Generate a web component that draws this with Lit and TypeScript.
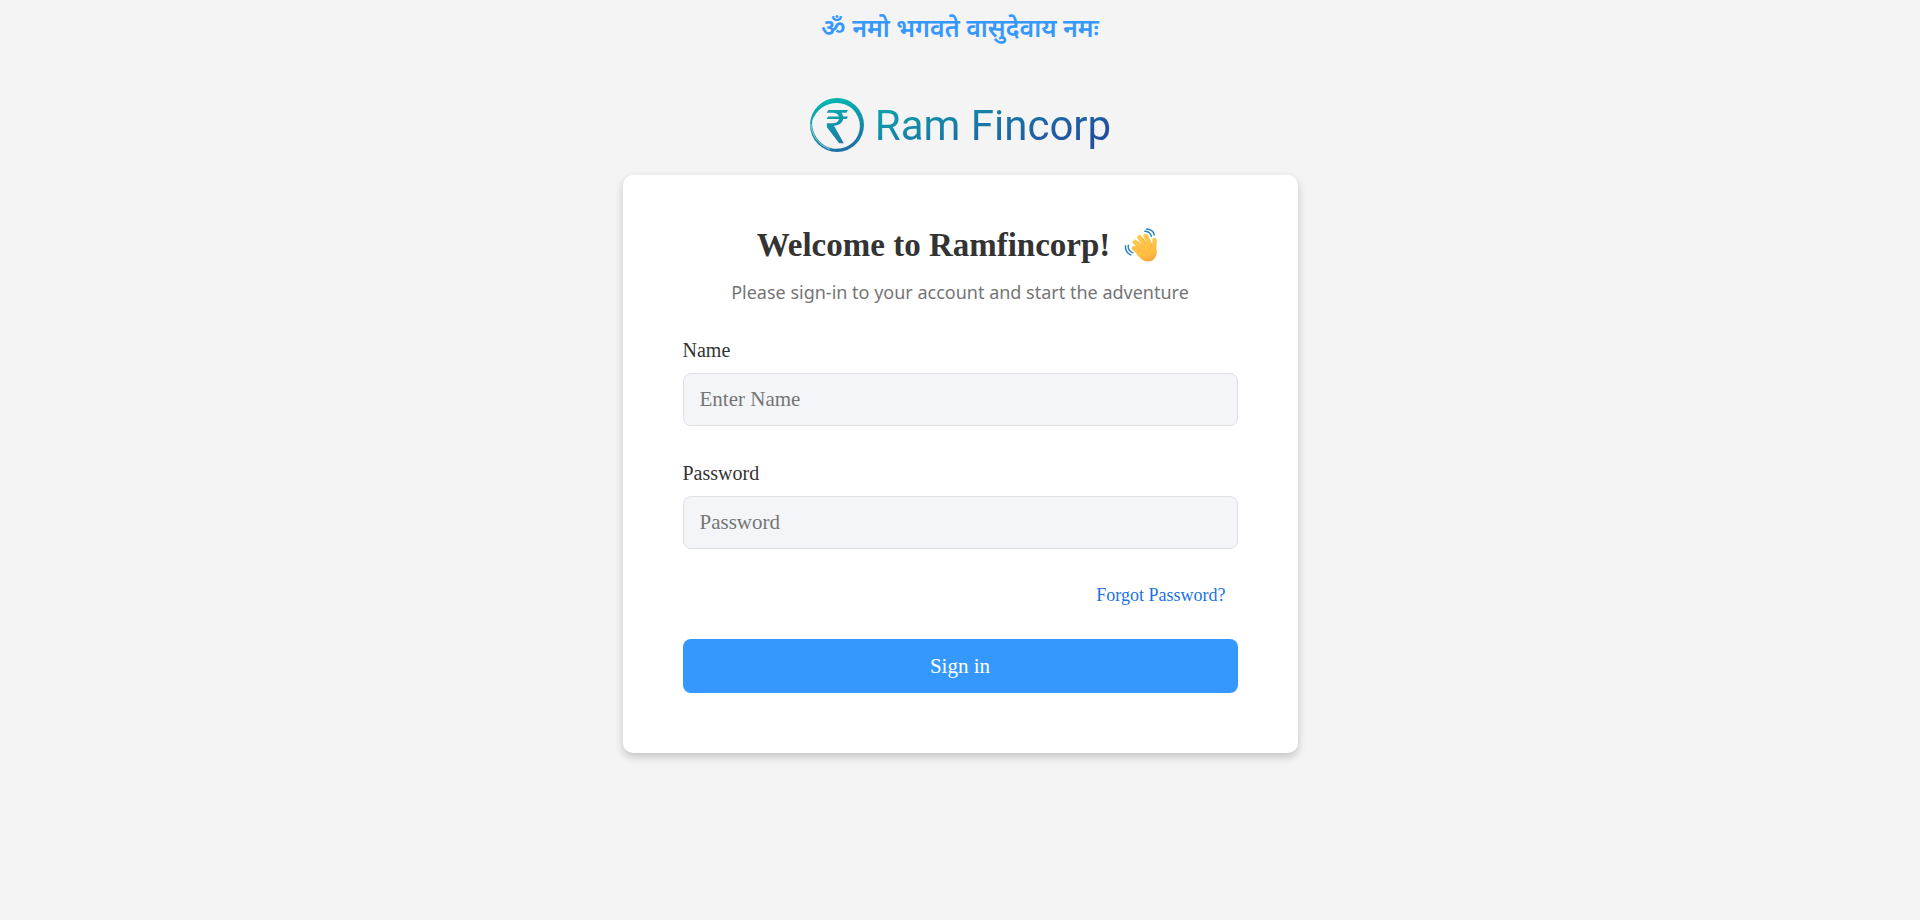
import { LitElement, html, css } from "lit";
import { customElement } from "lit/decorators.js";

@customElement("brand-logo")
class BrandLogo extends LitElement {
  static styles = css`
    :host {
      display: flex;
      align-items: center;
      gap: 10px;
    }
    .mark {
      width: 56px;
      height: 56px;
      flex: none;
    }
    .name {
      padding-top: 2px;
      font: 400 42px/54px Roboto, "Liberation Sans", sans-serif;
      background: linear-gradient(160deg, #0fa0ab 12%, #1779a6 45%, #2450a0 82%);
      -webkit-background-clip: text;
      background-clip: text;
      color: transparent;
    }
  `;

  render() {
    return html`
      <svg class="mark" viewBox="0 0 56 56" aria-hidden="true">
        <defs>
          <linearGradient id="ring" gradientUnits="userSpaceOnUse" x1="20" y1="1" x2="34" y2="55">
            <stop offset="0" stop-color="#04b8b0" />
            <stop offset="0.4" stop-color="#109aab" />
            <stop offset="1" stop-color="#1d6fa5" />
          </linearGradient>
        </defs>
        <path
          fill="url(#ring)"
          fill-rule="evenodd"
          d="M28 1a27 27 0 1 1 0 54a27 27 0 1 1 0-54zM28 6C16.500 6 7.500 13 3.200 23.500C1.800 38 13 51.800 28 51.800a22.900 22.900 0 0 0 0-45.800z"
        />
        <path d="M1.800 27C2.800 39 10 48.500 21 52.300" fill="none" stroke="#f4f4f4" stroke-width="0.6" />
        <path
          fill="url(#ring)"
          d="M19.300 13H38.900L37.500 15.700H32.400C33.400 16.700 34 18 34.200 19.400H38.900L37.500 22.100H34.200C33.400 26 30 28.500 25 28.800L34.800 46.300H30.200L17.900 30.300V26.300H23.500C27 26.300 29.300 25 30 22.100H17.700L19.100 19.400H29.900C29.200 17 27 15.700 23.500 15.700H17.700z"
        />
      </svg>
      <span class="name">Ram Fincorp</span>
    `;
  }
}

@customElement("waving-hand")
class WavingHand extends LitElement {
  static styles = css`
    :host {
      display: flex;
    }
    .hand {
      width: 39px;
      height: 34px;
    }
  `;

  render() {
    return html`
      <svg class="hand" viewBox="0 0 39 34" role="img" aria-label="Waving hand">
        <defs>
          <linearGradient id="skin" gradientUnits="userSpaceOnUse" x1="16" y1="6" x2="27" y2="36">
            <stop offset="0" stop-color="#ffcb50" />
            <stop offset="0.7" stop-color="#ffbc3e" />
            <stop offset="1" stop-color="#f3983c" />
          </linearGradient>
        </defs>
        <g fill="none" stroke="url(#skin)" stroke-width="4.800" stroke-linecap="round">
          <path d="M10.200 20.200L18 27" />
          <path d="M11 14L20 24" />
          <path d="M15.500 9.200L23 21" />
          <path d="M21.800 8.200L27 19" />
          <path d="M30.500 12C31 16 29.500 18 30.300 25" stroke-width="4.400" />
        </g>
        <path
          fill="url(#skin)"
          d="M14 19L20 14L27 16C29 18 32.700 17 32.600 24C32.500 30 28.800 33.500 24 33.500C19.500 33.500 16 30.500 12.500 26z"
        />
        <path
          fill="none"
          stroke="#f0a63a"
          stroke-width="0.800"
          stroke-linecap="round"
          d="M18.500 10L22 15.500M14.200 13.600L18.500 19M12.300 18.500L16 22.500M28.300 15.500C27.800 17.500 26 18.500 25.600 21"
        />
        <path
          fill="none"
          stroke="#2b86c9"
          stroke-width="1.500"
          stroke-linecap="round"
          d="M20.800 3.200C24 3.200 26.500 5.200 27.500 8.300M22.500 0.900C26.500 1 29.500 3.500 30.300 6.800M4.300 17.300C3.800 20.800 5.800 23.600 8.800 24.600M1.500 17.700C0.900 21.800 3.200 25.800 6.800 26.900"
        />
      </svg>
    `;
  }
}

@customElement("app-root")
class AppRoot extends LitElement {
  static styles = css`
    :host {
      display: block;
      min-height: 100vh;
      box-sizing: border-box;
      padding: 15px 20px 40px;
      background: #f4f4f4;
      color: #333;
      font-family: "Liberation Serif", "Times New Roman", serif;
    }
    .page {
      display: flex;
      flex-direction: column;
      align-items: center;
    }
    .mantra {
      margin: 0;
      font: 600 25px/32px "Noto Sans Devanagari", "Noto Sans", sans-serif;
      color: #3498ff;
    }
    .logo {
      margin-top: 50px;
    }
    .card {
      width: 100%;
      max-width: 675px;
      box-sizing: border-box;
      margin-top: 22px;
      padding: 50px 60px 60px;
      border-radius: 10px;
      background: #fff;
      box-shadow: 0 4px 8px rgba(0, 0, 0, 0.2);
    }
    .title {
      display: flex;
      justify-content: center;
      align-items: center;
      gap: 14px;
      margin: 0;
      font-size: 33px;
      line-height: 40px;
      font-weight: 700;
    }
    .lead {
      margin: 12px 0 0;
      text-align: center;
      font: 400 18px/30px "Noto Sans", "Open Sans", sans-serif;
      color: #757575;
    }
    .form {
      display: flex;
      flex-direction: column;
      margin-top: 32px;
    }
    .field {
      display: flex;
      flex-direction: column;
      gap: 12px;
    }
    .field + .field {
      margin-top: 36px;
    }
    .label {
      font-size: 20px;
      line-height: 22px;
    }
    .input {
      box-sizing: border-box;
      width: 100%;
      height: 53px;
      padding: 0 16px;
      border: 1px solid #e0e0e6;
      border-radius: 8px;
      background: #f3f5f9;
      color: #333;
      font-family: inherit;
      font-size: 21px;
      outline: none;
    }
    .input::placeholder {
      color: #757575;
    }
    .forgot {
      align-self: flex-end;
      margin: 34px 12px 0 0;
      font-size: 18px;
      line-height: 24px;
      color: #1a73e0;
      text-decoration: none;
    }
    .submit {
      height: 54px;
      margin-top: 32px;
      border: 0;
      border-radius: 8px;
      background: #3498ff;
      color: #fff;
      font-family: inherit;
      font-size: 21px;
      cursor: pointer;
    }
  `;

  render() {
    return html`
      <main class="page">
        <p class="mantra" lang="sa">ॐ नमो भगवते वासुदेवाय नमः</p>
        <brand-logo class="logo"></brand-logo>
        <section class="card">
          <h1 class="title">Welcome to Ramfincorp! <waving-hand></waving-hand></h1>
          <p class="lead">Please sign-in to your account and start the adventure</p>
          <form class="form" @submit=${(e: Event) => e.preventDefault()}>
            <div class="field">
              <label class="label" for="name">Name</label>
              <input class="input" id="name" type="text" placeholder="Enter Name" />
            </div>
            <div class="field">
              <label class="label" for="password">Password</label>
              <input class="input" id="password" type="password" placeholder="Password" />
            </div>
            <a class="forgot" href="#">Forgot Password?</a>
            <button class="submit" type="submit">Sign in</button>
          </form>
        </section>
      </main>
    `;
  }
}
